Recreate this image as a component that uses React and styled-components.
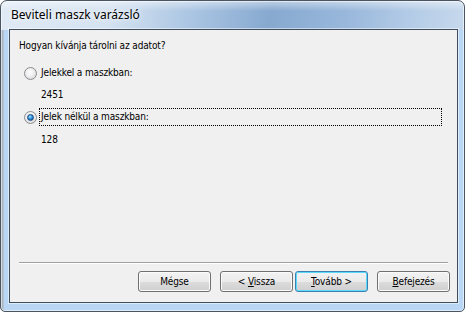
import React from 'react';
import styled, { createGlobalStyle } from 'styled-components';

const GlobalStyle = createGlobalStyle`
  html, body {
    margin: 0;
    padding: 0;
    background: #fff;
  }
  body {
    width: 467px;
    height: 314px;
    overflow: hidden;
  }
`;

const uiFont = `"DejaVu Sans Condensed", "DejaVu Sans", sans-serif`;

const Window = styled.div`
  box-sizing: border-box;
  width: 465px;
  height: 312px;
  display: flex;
  flex-direction: column;
  padding: 0 6px 8px 8px;
  border: 1px solid #4b5561;
  border-radius: 7px 7px 5px 5px;
  background:
    linear-gradient(180deg, rgba(255, 255, 255, 0.45) 0, rgba(255, 255, 255, 0) 10px) top / 100% 29px no-repeat,
    linear-gradient(100deg, #e0eaf5 0%, #d4e2f1 24%, #a9c4e2 42%, #87a9d0 58%, #98b7db 74%, #b7cee8 90%, #c6d8ec 100%) top / 100% 29px no-repeat,
    linear-gradient(90deg, #a9b4bf 0, #a9b4bf 2px, #b9d7f4 3px) left / 100% 100% no-repeat,
    #b9d7f4;
  box-shadow: inset 0 0 0 1px rgba(255, 255, 255, 0.55);
`;

const TitleBar = styled.div`
  height: 28px;
  padding: 6px 0 0 2px;
  box-sizing: border-box;
  font-family: "Noto Sans", sans-serif;
  font-size: 12px;
  line-height: 16px;
  color: #000;
  text-shadow: 0 0 6px rgba(255, 255, 255, 0.95), 0 0 3px rgba(255, 255, 255, 0.9);
`;

const Content = styled.div`
  flex: 1;
  display: flex;
  flex-direction: column;
  background: #f0f0f0;
  border: 1px solid #3f4d5c;
  box-shadow: 0 0 0 1px rgba(255, 255, 255, 0.5);
  font-family: ${uiFont};
  font-size: 10px;
  letter-spacing: -0.15px;
  line-height: 13px;
  color: #000;
`;

const Question = styled.div`
  margin: 9px 0 0 9px;
`;

const Options = styled.div`
  display: flex;
  flex-direction: column;
  padding-left: 14px;
`;

const OptionRow = styled.div`
  display: flex;
  align-items: center;
  height: 18px;
  margin-top: ${p => p.$top}px;
`;

const Radio = styled.span`
  position: relative;
  box-sizing: border-box;
  width: 13px;
  height: 13px;
  border-radius: 50%;
  border: 1px solid #8a8d90;
  background: radial-gradient(circle at 45% 40%, #ffffff 0%, #f0f0f0 40%, #cfcfcf 100%);
  flex: none;

  &::after {
    content: '';
    display: ${p => (p.$checked ? 'block' : 'none')};
    position: absolute;
    left: 2px;
    top: 2px;
    width: 7px;
    height: 7px;
    box-sizing: border-box;
    border-radius: 50%;
    border: 1px solid #1a4a80;
    background: radial-gradient(circle at 40% 35%, #aee8ff 0%, #2f8fd9 45%, #0f4a8e 100%);
  }
`;

const Label = styled.span`
  box-sizing: border-box;
  height: 18px;
  margin-left: 2px;
  padding: 1px 1px 0;
  width: ${p => (p.$focused ? '403px' : 'auto')};
  border: 1px dotted ${p => (p.$focused ? '#000' : 'transparent')};
  line-height: 14px;
`;

const Value = styled.div`
  margin: ${p => p.$top}px 0 0 17px;
`;

const Spacer = styled.div`
  flex: 1;
`;

const Separator = styled.div`
  margin: 0 9px;
  border-top: 1px solid #a0a0a0;
  border-bottom: 1px solid #fff;
`;

const Footer = styled.div`
  display: flex;
  justify-content: flex-end;
  gap: 9px;
  margin-top: 7px;
  padding: 0 7px 10px 0;
`;

const Pair = styled.div`
  display: flex;
  gap: 2px;
`;

const Button = styled.button`
  box-sizing: border-box;
  width: 73px;
  height: 21px;
  padding: 0;
  border-radius: 3px;
  border: 1px solid ${p => (p.$default ? '#3c7fb1' : '#707070')};
  background: linear-gradient(180deg, #f2f2f2 0%, #ebebeb 50%, #dddddd 51%, #cfcfcf 100%);
  box-shadow: inset 0 0 0 1px ${p => (p.$default ? '#5cd9fb' : '#fbfbfb')};
  font-family: ${uiFont};
  font-size: 10px;
  letter-spacing: -0.15px;
  color: #000;
  text-align: center;

  u {
    text-decoration: underline;
    text-underline-offset: 1px;
  }
`;

export default function App() {
  return (
    <>
      <GlobalStyle />
      <Window>
        <TitleBar>Beviteli maszk varázsló</TitleBar>
        <Content>
          <Question>Hogyan kívánja tárolni az adatot?</Question>
          <Options>
            <OptionRow $top={12}>
              <Radio />
              <Label>Jelekkel a maszkban:</Label>
            </OptionRow>
            <Value $top={6}>2451</Value>
            <OptionRow $top={7}>
              <Radio $checked />
              <Label $focused>Jelek nélkül a maszkban:</Label>
            </OptionRow>
            <Value $top={7}>128</Value>
          </Options>
          <Spacer />
          <Separator />
          <Footer>
            <Button>Mégse</Button>
            <Pair>
              <Button>&lt; <u>V</u>issza</Button>
              <Button $default><u>T</u>ovább &gt;</Button>
            </Pair>
            <Button><u>B</u>efejezés</Button>
          </Footer>
        </Content>
      </Window>
    </>
  );
}
